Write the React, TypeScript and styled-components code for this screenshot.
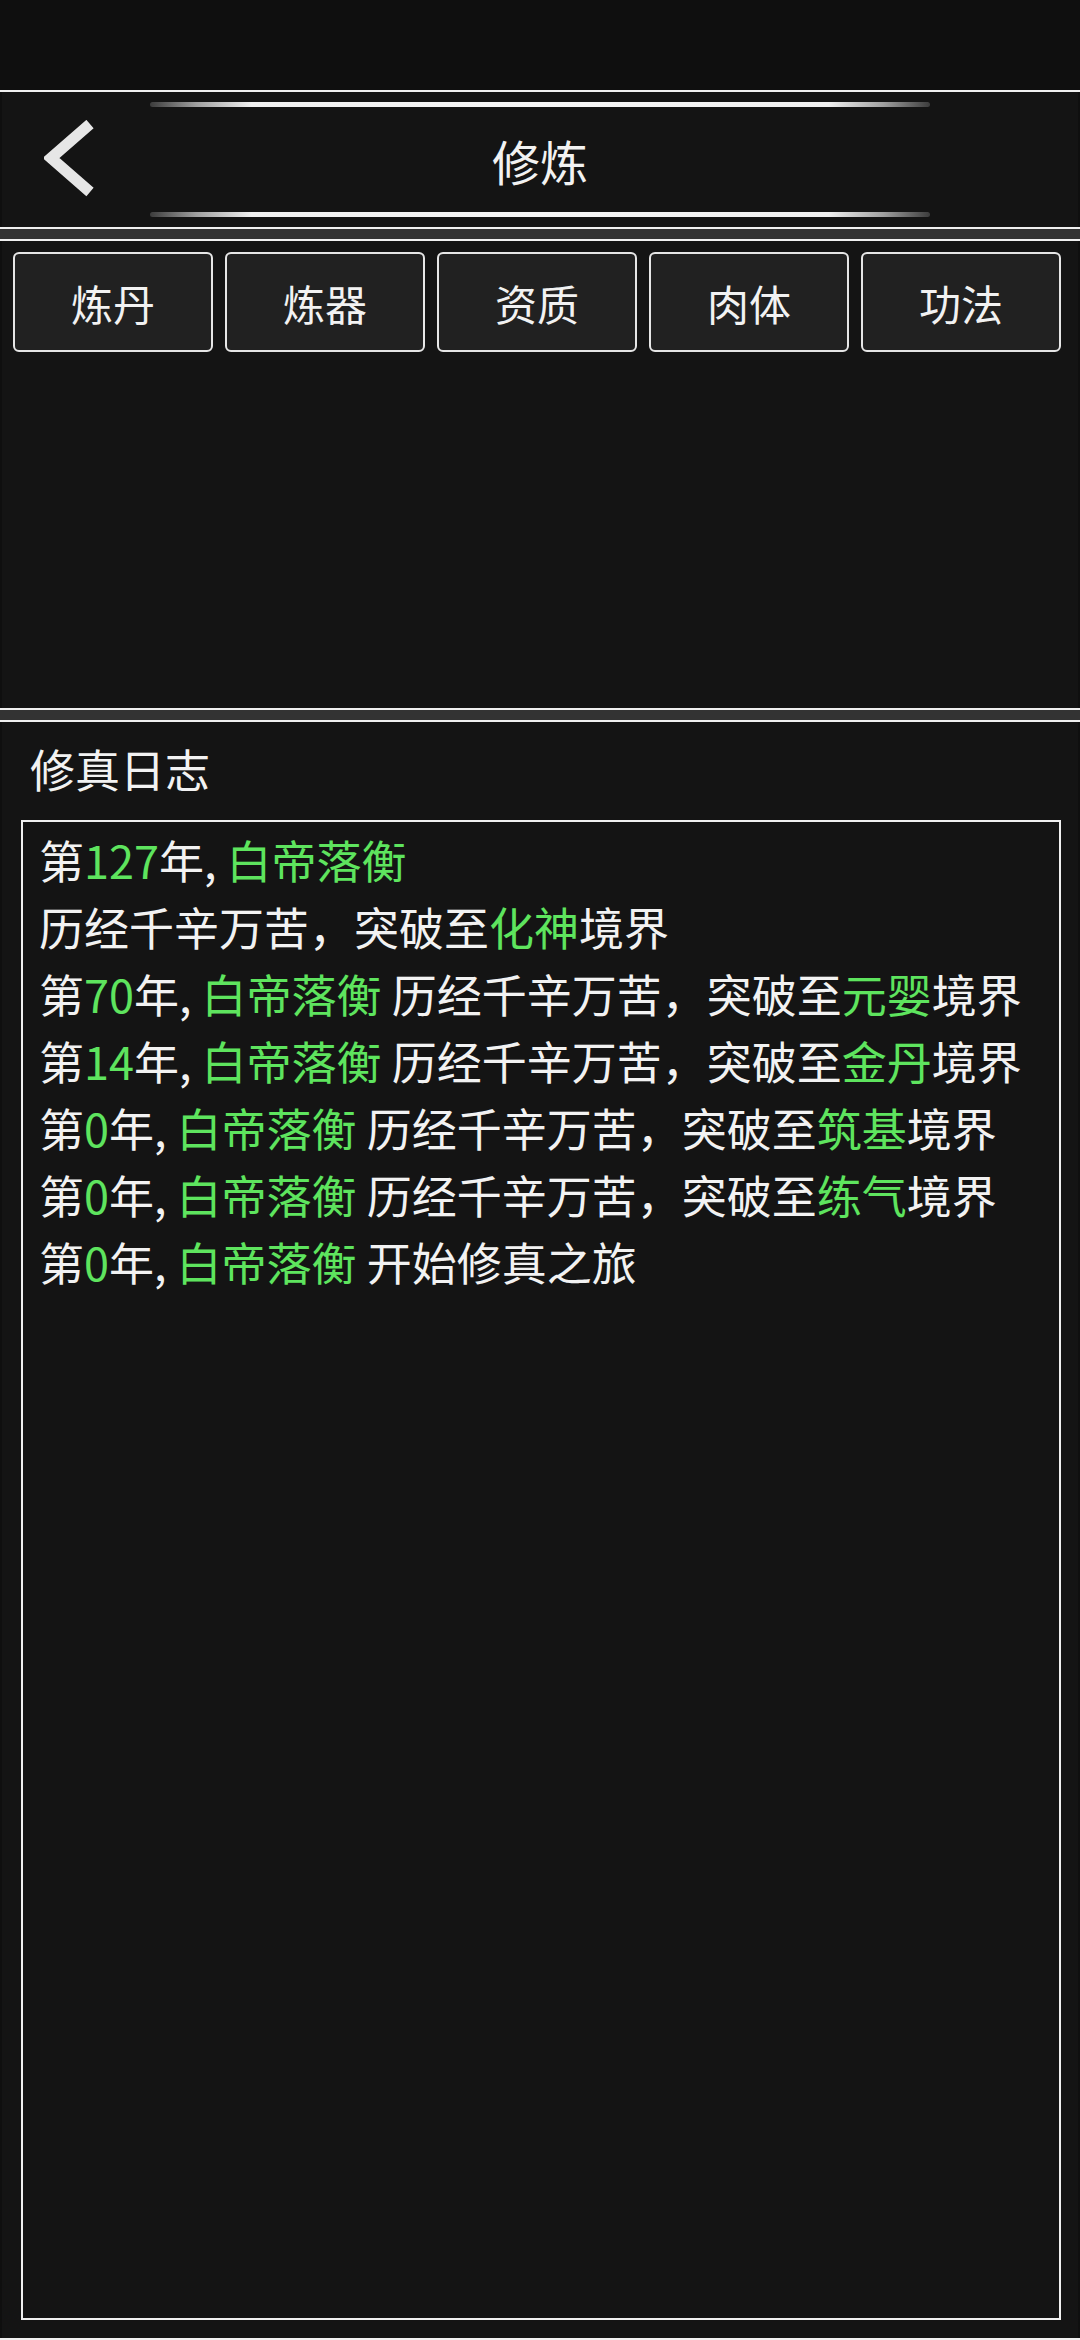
import { FC } from "react";
import styled, { createGlobalStyle } from "styled-components";

const GlobalStyle = createGlobalStyle`
  html, body {
    margin: 0;
    padding: 0;
    background: #0f0f0f;
  }
  body {
    font-family: "Noto Sans CJK SC", "Noto Sans", sans-serif;
    color: #f2f2f2;
  }
`;

interface LogEntry {
  year: number;
  realm?: string;
}

const PLAYER = "白帝落衡";
const TABS = ["炼丹", "炼器", "资质", "肉体", "功法"];

const LOGS: LogEntry[] = [
  { year: 127, realm: "化神" },
  { year: 70, realm: "元婴" },
  { year: 14, realm: "金丹" },
  { year: 0, realm: "筑基" },
  { year: 0, realm: "练气" },
  { year: 0 },
];

const BackIcon: FC = () => (
  <svg width="52" height="80" viewBox="0 0 52 80">
    <polyline
      points="46,4 7,38 46,72"
      fill="none"
      stroke="#e6e6e6"
      strokeWidth="11"
      strokeLinejoin="miter"
    />
  </svg>
);

export default function App() {
  return (
    <>
      <GlobalStyle />
      <Page>
        <StatusBar />
        <Panel>
          <Header>
            <BackButton>
              <BackIcon />
            </BackButton>
            <TitleColumn>
              <Deco />
              <Title>修炼</Title>
              <Deco />
            </TitleColumn>
            <HeaderSpacer />
          </Header>
        </Panel>
        <Gap />
        <Panel>
          <TabGrid>
            {TABS.map((t) => (
              <TabButton key={t}>{t}</TabButton>
            ))}
          </TabGrid>
        </Panel>
        <Gap />
        <LogPanel>
          <LogTitle>修真日志</LogTitle>
          <LogBox>
            {LOGS.map((log, i) => (
              <LogLine key={i}>
                第<Green>{log.year}</Green>年, <Green>{PLAYER}</Green>{" "}
                <Message>
                  {log.realm ? (
                    <>
                      历经千辛万苦，突破至<Green>{log.realm}</Green>境界
                    </>
                  ) : (
                    "开始修真之旅"
                  )}
                </Message>
              </LogLine>
            ))}
          </LogBox>
        </LogPanel>
      </Page>
    </>
  );
}

const Page = styled.div`
  width: 1080px;
  height: 2340px;
  display: flex;
  flex-direction: column;
  background: #0f0f0f;
  overflow: hidden;
`;

const StatusBar = styled.div`
  height: 90px;
  flex: none;
`;

const Panel = styled.section`
  flex: none;
  background: #141414;
  border-top: 2px solid #f0f0f0;
  border-bottom: 2px solid #f0f0f0;
  box-shadow: inset 2px 0 0 #0f0f0f, inset -2px 0 0 #0f0f0f;
`;

const Gap = styled.div`
  height: 10px;
  flex: none;
  background: #333333;
`;

const Header = styled.div`
  height: 135px;
  display: flex;
  align-items: stretch;
`;

const BackButton = styled.div`
  width: 150px;
  display: flex;
  align-items: center;
  padding-left: 44px;
  box-sizing: border-box;
`;

const HeaderSpacer = styled.div`
  width: 150px;
`;

const TitleColumn = styled.div`
  flex: 1;
  display: flex;
  flex-direction: column;
  justify-content: space-between;
  align-items: stretch;
  padding: 10px 0 10px;
`;

const Deco = styled.div`
  height: 5px;
  border-radius: 3px;
  background: linear-gradient(
    90deg,
    #3c3c3c 0%,
    #a0a0a0 6%,
    #f0f0f0 13%,
    #f6f6f6 50%,
    #f0f0f0 87%,
    #a0a0a0 94%,
    #3c3c3c 100%
  );
`;

const Title = styled.div`
  text-align: center;
  font-size: 48px;
  line-height: 60px;
  color: #f2f2f2;
`;

const TabGrid = styled.div`
  height: 467px;
  box-sizing: border-box;
  display: grid;
  grid-template-columns: repeat(5, 200px);
  grid-auto-rows: 100px;
  column-gap: 12px;
  align-content: start;
  padding: 11px 0 0 13px;
`;

const TabButton = styled.div`
  box-sizing: border-box;
  background: #212121;
  border: 2.5px solid #e6e6e6;
  border-radius: 6px;
  display: flex;
  align-items: center;
  justify-content: center;
  font-size: 42px;
  color: #f2f2f2;
`;

const LogPanel = styled(Panel)`
  flex: 1;
  display: flex;
  flex-direction: column;
  padding: 17px 19px 18px 21px;
`;

const LogTitle = styled.div`
  font-size: 45px;
  line-height: 60px;
  padding-left: 9px;
  margin-bottom: 21px;
`;

const LogBox = styled.div`
  flex: 1;
  border: 2px solid #f0f0f0;
  padding: 4px 19px 0 16px;
`;

const LogLine = styled.div`
  font-size: 45px;
  line-height: 67px;
  color: #f2f2f2;
`;

const Green = styled.span`
  color: #5ee45e;
`;

const Message = styled.span`
  display: inline-block;
`;
